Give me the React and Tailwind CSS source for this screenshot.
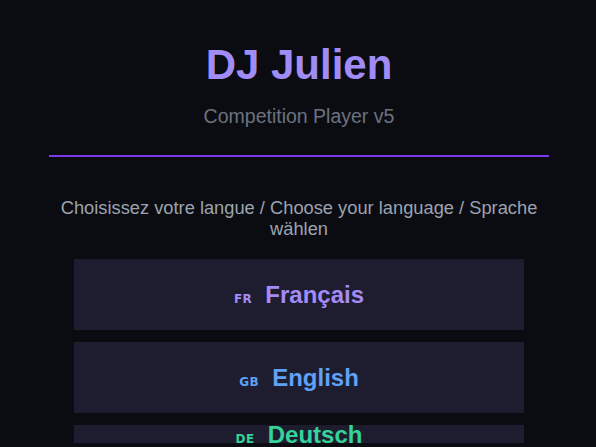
const languages = [
  { code: 'FR', label: 'Français', color: 'text-[#a48bf8]' },
  { code: 'GB', label: 'English', color: 'text-[#5ea1f6]' },
  { code: 'DE', label: 'Deutsch', color: 'text-[#34d399]', entering: true },
];

export default function App() {
  return (
    <div className="min-h-screen bg-[#0b0c11] pl-[2px] font-['Liberation_Sans',Arial,sans-serif]">
      <div className="h-[443px] overflow-hidden">
        <div className="mx-auto w-[500px] pt-10 text-center">
          {/* Header */}
          <h1 className="text-[42px] font-bold leading-[50px] text-[#a08cf7]">DJ Julien</h1>
          <p className="mt-3 text-[19.5px] leading-7 text-[#6b7280]">Competition Player v5</p>
          <div className="mt-[25px] h-[2px] bg-[#7c3aed]" />

          {/* Language picker */}
          <p className="mt-10 text-[18.3px] leading-[21px] text-[#9ca3af]">
            Choisissez votre langue / Choose your language / Sprache wählen
          </p>
          <div className="mx-auto mt-5 flex w-[450px] flex-col gap-3">
            {languages.map((lang) => (
              <button
                key={lang.code}
                className={`flex h-[71px] shrink-0 items-center justify-center gap-[13px] bg-[#1e1d2f] ${lang.entering ? 'pb-[52px]' : ''} ${lang.color}`}
              >
                <span className="mt-[9px] font-['DejaVu_Sans',sans-serif] text-[12px] font-bold tracking-[0.5px]">
                  {lang.code}
                </span>
                <span className="text-2xl font-bold">{lang.label}</span>
              </button>
            ))}
          </div>
        </div>
      </div>
    </div>
  );
}
